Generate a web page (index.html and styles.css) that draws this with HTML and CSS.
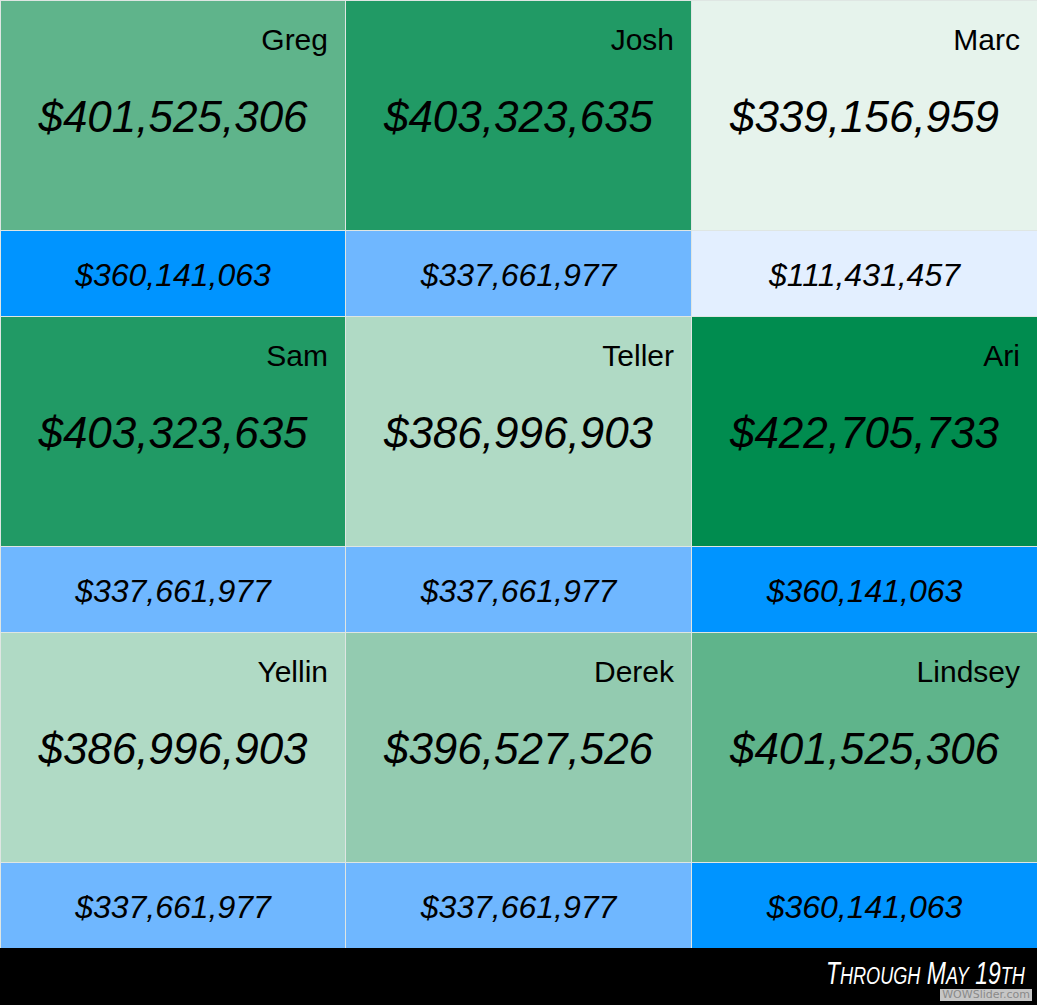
FILE: index.html
```html
<!DOCTYPE html>
<html lang="en">
<head>
<meta charset="utf-8">
<title>Totals through May 19th</title>
<link rel="stylesheet" href="styles.css">
</head>
<body>
<div class="board">
  <div class="grid">
    <div class="tile g-mid"><div class="name">Greg</div><div class="amount">$401,525,306</div></div>
    <div class="tile g-dark"><div class="name">Josh</div><div class="amount">$403,323,635</div></div>
    <div class="tile g-pale"><div class="name">Marc</div><div class="amount">$339,156,959</div></div>

    <div class="sub b-strong">$360,141,063</div>
    <div class="sub b-mid">$337,661,977</div>
    <div class="sub b-pale">$111,431,457</div>

    <div class="tile g-dark"><div class="name">Sam</div><div class="amount">$403,323,635</div></div>
    <div class="tile g-light"><div class="name">Teller</div><div class="amount">$386,996,903</div></div>
    <div class="tile g-deep"><div class="name">Ari</div><div class="amount">$422,705,733</div></div>

    <div class="sub b-mid">$337,661,977</div>
    <div class="sub b-mid">$337,661,977</div>
    <div class="sub b-strong">$360,141,063</div>

    <div class="tile g-light"><div class="name">Yellin</div><div class="amount">$386,996,903</div></div>
    <div class="tile g-soft"><div class="name">Derek</div><div class="amount">$396,527,526</div></div>
    <div class="tile g-mid"><div class="name">Lindsey</div><div class="amount">$401,525,306</div></div>

    <div class="sub b-mid">$337,661,977</div>
    <div class="sub b-mid">$337,661,977</div>
    <div class="sub b-strong">$360,141,063</div>
  </div>
  <div class="footer">
    <span class="caption"><span class="cap">T</span><span class="sc">hrough</span> <span class="cap">M</span><span class="sc">ay</span> <span class="cap">19</span><span class="sc">th</span></span>
  </div>
  <div class="watermark">WOWSlider.com</div>
</div>
</body>
</html>
```

FILE: styles.css
```css
html, body {
  margin: 0;
  padding: 0;
  background: #000;
}

body {
  font-family: "Liberation Sans", Arial, Helvetica, sans-serif;
  color: #000;
}

.board {
  position: relative;
  width: 1037px;
  height: 1005px;
  overflow: hidden;
  background: #000;
}

.grid {
  display: grid;
  grid-template-columns: 344px 345px 345px;
  grid-template-rows: 229px 85px 229px 85px 229px 85px;
  gap: 1px;
  padding: 1px 0 0 1px;
  background: #dfe6e3;
  height: 948px;
  box-sizing: border-box;
}

.tile {
  display: flex;
  flex-direction: column;
}

.name {
  font-size: 30px;
  line-height: 33px;
  padding: 22px 17px 0 0;
  text-align: right;
}

.amount {
  margin-top: 36px;
  font-size: 44px;
  line-height: 50px;
  font-style: italic;
  text-align: center;
}

.sub {
  display: flex;
  align-items: center;
  justify-content: center;
  padding-top: 4px;
  box-sizing: border-box;
  font-size: 32px;
  line-height: 37px;
  font-style: italic;
}

.g-mid   { background: #5fb48b; }
.g-dark  { background: #219a65; }
.g-pale  { background: #e6f3ec; }
.g-light { background: #b0dac5; }
.g-deep  { background: #008c4f; }
.g-soft  { background: #93cbb0; }

.b-strong { background: #0094ff; }
.b-mid    { background: #6fb7ff; }
.b-pale   { background: #e3efff; }

.footer {
  height: 57px;
  background: #000;
  display: flex;
  justify-content: flex-end;
  align-items: flex-start;
  padding-right: 12px;
}

.caption {
  display: inline-block;
  margin-top: 9px;
  color: #fff;
  font-style: italic;
  font-size: 31px;
  line-height: 34px;
  white-space: nowrap;
  transform: scaleX(0.74);
  transform-origin: right center;
}

.sc {
  font-size: 0.79em;
  text-transform: uppercase;
}

.watermark {
  position: absolute;
  right: 5px;
  bottom: 4px;
  background: #c6c6c6;
  color: #8a8a8a;
  font-family: "DejaVu Sans", sans-serif;
  font-size: 11px;
  line-height: 12px;
  padding: 0 2px;
}
```
